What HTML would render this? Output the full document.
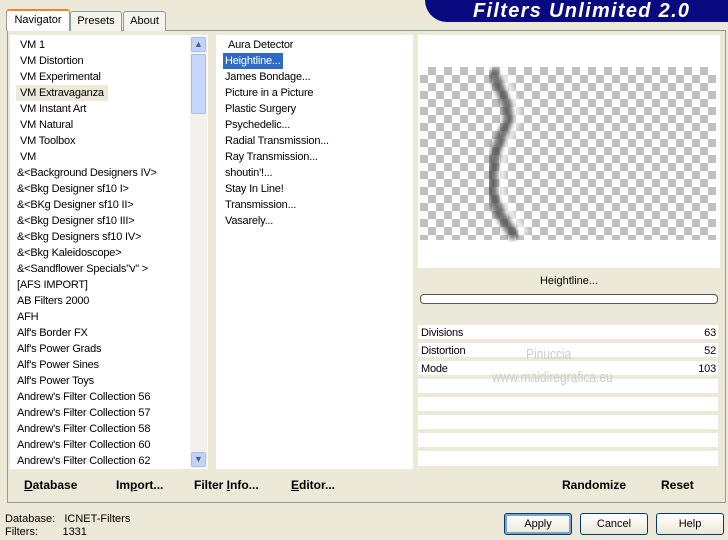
<!DOCTYPE html>
<html><head><style>
*{margin:0;padding:0;box-sizing:border-box}
body{width:728px;height:540px;background:#ece9d8;font-family:"Liberation Sans",sans-serif;font-size:11px;color:#000;position:relative;overflow:hidden}
.a{position:absolute}
.banner{left:425px;top:0;width:303px;height:22px;background:#0a0a80;border-bottom-left-radius:22px 22px;color:#fff;font-weight:bold;font-style:italic;font-size:20px;line-height:23px;padding-left:48px;letter-spacing:1.3px}
.tab{top:11px;height:20px;border:1px solid #919b9c;border-bottom:none;border-radius:3px 3px 0 0;background:#f4f3ee;text-align:center;line-height:19px;font-size:11px}
.panel{left:7px;top:30px;width:719px;height:473px;border:1px solid #919b9c;background:#ece9d8}
.list{background:#fff}
.it{position:absolute;height:16px;line-height:16px;white-space:nowrap;letter-spacing:-0.2px}
.btn{height:22px;top:513px;border:1px solid #003c74;border-radius:3px;background:linear-gradient(#fff,#ece9d8);text-align:center;line-height:20px;font-size:11px}
.bb{font-weight:bold;font-size:12px;top:478px}
.row{left:418px;width:300px;height:16px;background:#fff;border-bottom:2px solid #ece9d8}
</style></head><body>
<div class="a banner">Filters Unlimited 2.0</div>
<div class="a panel"></div>
<div class="a tab" style="left:6px;top:9px;width:64px;height:22px;background:#fcfcfe;border-top:2px solid #e68b2c;z-index:2">Navigator</div>
<div class="a tab" style="left:70px;width:52px">Presets</div>
<div class="a tab" style="left:123px;width:43px">About</div>

<div class="a list" style="left:10px;top:35px;width:198px;height:434px"></div>
<div class="a" style="left:190px;top:36px;width:17px;height:432px;background:#f3f1ec"></div>
<div class="a" style="left:191px;top:37px;width:15px;height:15px;background:#c1d3fb;border:1px solid #a6bef0;border-radius:2px;font-size:9px;text-align:center;color:#4d6185;line-height:13px">&#9650;</div>
<div class="a" style="left:191px;top:54px;width:15px;height:60px;background:#c6d7fb;border:1px solid #a6bef0;border-radius:2px"></div>
<div class="a" style="left:191px;top:452px;width:15px;height:15px;background:#c1d3fb;border:1px solid #a6bef0;border-radius:2px;font-size:9px;text-align:center;color:#4d6185;line-height:13px">&#9660;</div>

<div class="a list" style="left:216px;top:35px;width:197px;height:434px"></div>
<div class="a" style="left:418px;top:35px;width:302px;height:233px;background:#fff"></div>
<div class="a" style="left:420px;top:67px;width:296px;height:173px;background-color:#fff;background-image:linear-gradient(45deg,#c0c0c0 25%,transparent 25%,transparent 75%,#c0c0c0 75%),linear-gradient(45deg,#c0c0c0 25%,transparent 25%,transparent 75%,#c0c0c0 75%);background-size:16px 16px;background-position:0 0,8px 8px"></div>
<svg class="a" style="left:470px;top:62px" width="90" height="180"><defs><filter id="f"><feGaussianBlur stdDeviation="2.5"/></filter></defs>
<path d="M22 8 C30 28,42 45,38 62 C28 82,20 100,22 130 C26 150,38 162,46 176" stroke="#444" stroke-width="11" fill="none" filter="url(#f)" opacity="0.75"/>
<path d="M32 8 C40 28,50 45,46 62 C36 82,30 100,32 130 C36 150,48 160,56 172" stroke="#fff" stroke-width="6" fill="none" filter="url(#f)" opacity="0.8"/></svg>

<div class="a" style="left:418px;top:270px;width:302px;height:20px;text-align:center;line-height:22px">Heightline...</div>
<div class="a" style="left:420px;top:294px;width:298px;height:10px;border:1px solid #555;border-radius:4px;background:#fff"></div>
<div class="a row" style="top:325px"></div><div class="a row" style="top:343px"></div><div class="a row" style="top:361px"></div>
<div class="a row" style="top:379px"></div><div class="a row" style="top:397px"></div><div class="a row" style="top:415px"></div>
<div class="a row" style="top:433px"></div><div class="a row" style="top:451px;height:17px"></div>
<div class="a" style="left:526px;top:346px;color:#ccc;font-size:15px;transform:scaleX(0.8);transform-origin:left">Pinuccia</div>
<div class="a" style="left:492px;top:369px;color:#ccc;font-size:15px;transform:scaleX(0.8);transform-origin:left">www.maidiregrafica.eu</div>
<div class="a it" style="left:421px;top:325px">Divisions</div><div class="a it" style="left:690px;top:325px;width:26px;text-align:right">63</div>
<div class="a it" style="left:421px;top:343px">Distortion</div><div class="a it" style="left:690px;top:343px;width:26px;text-align:right">52</div>
<div class="a it" style="left:421px;top:361px">Mode</div><div class="a it" style="left:690px;top:361px;width:26px;text-align:right">103</div>

<div class="a" style="left:10px;top:35px;font-size:11px">
<div class="it" style="left:10px;top:2px">VM 1</div>
<div class="it" style="left:10px;top:18px">VM Distortion</div>
<div class="it" style="left:10px;top:34px">VM Experimental</div>
<div class="it" style="left:6px;top:50px;padding:0 4px;background:#ece9d8">VM Extravaganza</div>
<div class="it" style="left:10px;top:66px">VM Instant Art</div>
<div class="it" style="left:10px;top:82px">VM Natural</div>
<div class="it" style="left:10px;top:98px">VM Toolbox</div>
<div class="it" style="left:10px;top:114px">VM</div>
<div class="it" style="left:7px;top:130px">&amp;&lt;Background Designers IV&gt;</div>
<div class="it" style="left:7px;top:146px">&amp;&lt;Bkg Designer sf10 I&gt;</div>
<div class="it" style="left:7px;top:162px">&amp;&lt;BKg Designer sf10 II&gt;</div>
<div class="it" style="left:7px;top:178px">&amp;&lt;Bkg Designer sf10 III&gt;</div>
<div class="it" style="left:7px;top:194px">&amp;&lt;Bkg Designers sf10 IV&gt;</div>
<div class="it" style="left:7px;top:210px">&amp;&lt;Bkg Kaleidoscope&gt;</div>
<div class="it" style="left:7px;top:226px">&amp;&lt;Sandflower Specials"v" &gt;</div>
<div class="it" style="left:7px;top:242px">[AFS IMPORT]</div>
<div class="it" style="left:7px;top:258px">AB Filters 2000</div>
<div class="it" style="left:7px;top:274px">AFH</div>
<div class="it" style="left:7px;top:290px">Alf's Border FX</div>
<div class="it" style="left:7px;top:306px">Alf's Power Grads</div>
<div class="it" style="left:7px;top:322px">Alf's Power Sines</div>
<div class="it" style="left:7px;top:338px">Alf's Power Toys</div>
<div class="it" style="left:7px;top:354px">Andrew's Filter Collection 56</div>
<div class="it" style="left:7px;top:370px">Andrew's Filter Collection 57</div>
<div class="it" style="left:7px;top:386px">Andrew's Filter Collection 58</div>
<div class="it" style="left:7px;top:402px">Andrew's Filter Collection 60</div>
<div class="it" style="left:7px;top:418px">Andrew's Filter Collection 62</div>
</div>
<div class="a" style="left:216px;top:35px">
<div class="it" style="left:12px;top:2px">Aura Detector</div>
<div class="it" style="left:7px;top:18px;padding:0 2px;background:#316ac5;color:#fff">Heightline...</div>
<div class="it" style="left:9px;top:34px">James Bondage...</div>
<div class="it" style="left:9px;top:50px">Picture in a Picture</div>
<div class="it" style="left:9px;top:66px">Plastic Surgery</div>
<div class="it" style="left:9px;top:82px">Psychedelic...</div>
<div class="it" style="left:9px;top:98px">Radial Transmission...</div>
<div class="it" style="left:9px;top:114px">Ray Transmission...</div>
<div class="it" style="left:9px;top:130px">shoutin'!...</div>
<div class="it" style="left:9px;top:146px">Stay In Line!</div>
<div class="it" style="left:9px;top:162px">Transmission...</div>
<div class="it" style="left:9px;top:178px">Vasarely...</div>
</div>
<div class="a" style="left:414px;top:35px;width:4px;height:465px;background:#ece9d8"></div>
<div class="a bb" style="left:24px"><u>D</u>atabase</div>
<div class="a bb" style="left:116px">Im<u>p</u>ort...</div>
<div class="a bb" style="left:194px">Filter <u>I</u>nfo...</div>
<div class="a bb" style="left:291px"><u>E</u>ditor...</div>
<div class="a bb" style="left:562px">Randomize</div>
<div class="a bb" style="left:661px">Reset</div>
<div class="a" style="left:5px;top:513px;line-height:13px">Database:&nbsp;&nbsp; ICNET-Filters<br>Filters:&nbsp;&nbsp;&nbsp;&nbsp;&nbsp;&nbsp;&nbsp; 1331</div>
<div class="a btn" style="left:504px;width:68px;box-shadow:inset 0 0 0 2px #7da2ce">Apply</div>
<div class="a btn" style="left:580px;width:68px">Cancel</div>
<div class="a btn" style="left:656px;width:68px">Help</div>
</body></html>
